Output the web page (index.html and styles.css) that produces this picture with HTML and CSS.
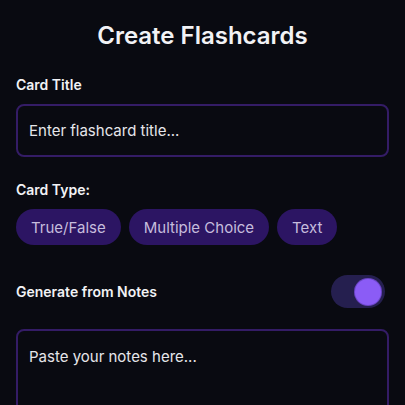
FILE: index.html
```html
<!DOCTYPE html>
<html lang="en">
<head>
  <meta charset="UTF-8" />
  <meta name="viewport" content="width=device-width, initial-scale=1.0" />
  <title>Create Flashcards</title>
  <link rel="stylesheet" href="styles.css">
</head>
<body>
  <div class="container">
    <h1>Create Flashcards</h1>

    <div class="form-group">
      <label for="cardTitle">Card Title</label>
      <input type="text" id="cardTitle" placeholder="Enter flashcard title..." />
    </div>

    <div class="form-group">
      <label>Card Type:</label>
      <div class="chips">
        <button class="chip">True/False</button>
        <button class="chip">Multiple Choice</button>
        <button class="chip">Text</button>
      </div>
    </div>

    <div class="toggle-row">
      <span class="toggle-label">Generate from Notes</span>
      <div class="toggle on"><div class="knob"></div></div>
    </div>

    <textarea id="notes" placeholder="Paste your notes here..."></textarea>
  </div>
</body>
</html>
```

FILE: styles.css
```css
* {
  box-sizing: border-box;
}
body {
  font-family: Inter, "Noto Sans", sans-serif;
  margin: 0;
  background: #090a11;
  color: #f2f2f5;
  overflow: hidden;
}
.container {
  padding: 20px 16px 0;
}
h1 {
  text-align: center;
  font-size: 24px;
  font-weight: 600;
  line-height: 32px;
  margin: 0 0 24px;
}
.form-group {
  display: flex;
  flex-direction: column;
}
.form-group label {
  font-size: 14px;
  font-weight: 600;
  line-height: 18px;
  margin-bottom: 10px;
}
.form-group input {
  height: 53px;
  padding: 0 11px;
  font-family: inherit;
  font-size: 15px;
  color: #f2f2f5;
  background: transparent;
  border: 2px solid #341c66;
  border-radius: 8px;
  margin-bottom: 24px;
}
input::placeholder,
textarea::placeholder {
  color: #e6e6ea;
}
.chips {
  display: flex;
  gap: 8px;
}
.chip {
  height: 36px;
  padding: 0 15px;
  font-family: inherit;
  font-size: 15px;
  color: #c6bddd;
  background: #2c1563;
  border: none;
  border-radius: 18px;
}
.toggle-row {
  display: flex;
  align-items: center;
  justify-content: space-between;
  margin: 30px 4px 21px 0;
}
.toggle-label {
  font-size: 14px;
  font-weight: 600;
}
.toggle {
  width: 54px;
  height: 33px;
  border-radius: 17px;
  background: #251f4f;
  display: flex;
  align-items: center;
  justify-content: flex-end;
  padding: 0 4px;
}
.knob {
  width: 26px;
  height: 26px;
  border-radius: 50%;
  background: #8b5cf6;
  box-shadow: 0 0 0 1px #6a45c4;
}
textarea {
  display: block;
  width: 100%;
  height: 120px;
  padding: 16px 11px;
  font-family: inherit;
  font-size: 15px;
  color: #f2f2f5;
  background: transparent;
  border: 2px solid #341c66;
  border-radius: 8px;
  resize: none;
}
```
